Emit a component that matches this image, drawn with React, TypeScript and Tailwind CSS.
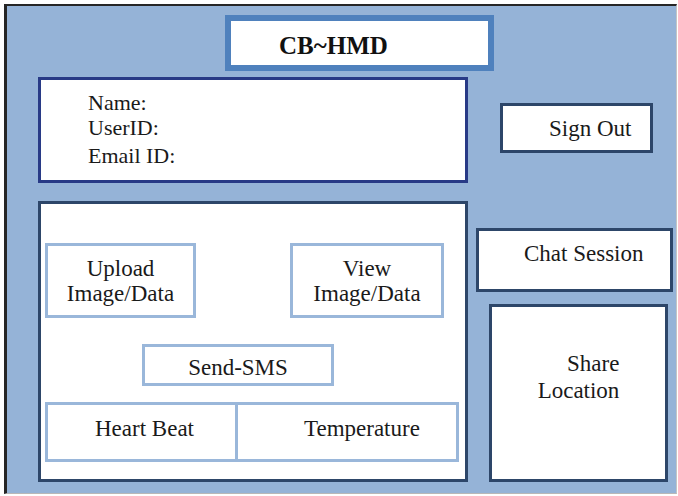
export default function App() {
  return (
    <div className="w-[678px] h-[496px] bg-white pt-[4px] pl-[4px] [font-family:'Liberation_Serif',serif] text-[#1a1a1a]">
      <div className="w-[673px] h-[490px] bg-[#95b3d7] border-l-[3px] border-t-[2px] border-l-[#262626] border-t-[#262626] border-r border-b border-r-[#c4c4c4] border-b-[#b8b8b8] flex flex-col">
        {/* title */}
        <div className="ml-[218px] mt-[9px] w-[269px] h-[56px] border-[6px] border-[#4f81bd] bg-white flex items-center pl-[48px] pt-1">
          <span className="text-[25px] leading-none font-bold text-[#111]">CB~HMD</span>
        </div>

        <div className="flex mt-[6px]">
          {/* left column */}
          <div className="ml-[31px] w-[430px] flex flex-col">
            <div className="h-[106px] border-[3px] border-[#283a86] bg-white pl-[47px] pt-[10px] text-[22px] leading-[25px]">
              <div>Name:</div>
              <div>UserID:</div>
              <div className="mt-[3px]">Email ID:</div>
            </div>

            <div className="mt-[18px] h-[281px] border-[3px] border-[#2d4669] bg-white flex flex-col text-[23px] leading-[25px]">
              <div className="flex mt-[39px] ml-[4px]">
                <div className="w-[151px] h-[75px] border-[3px] border-[#9ab7da] flex items-center justify-center text-center">
                  Upload
                  <br />
                  Image/Data
                </div>
                <div className="ml-[94px] w-[154px] h-[75px] border-[3px] border-[#9ab7da] flex items-center justify-center text-center">
                  View
                  <br />
                  Image/Data
                </div>
              </div>

              <div className="ml-[101px] mt-[26px] w-[192px] h-[42px] border-[3px] border-[#9ab7da] flex items-center justify-center pt-[4px]">
                Send-SMS
              </div>

              <div className="flex ml-[4px] mt-[16px]">
                <div className="w-[193px] h-[60px] border-[3px] border-[#9ab7da] pl-[47px] pt-[11px]">Heart Beat</div>
                <div className="w-[221px] h-[60px] border-[3px] border-l-0 border-[#9ab7da] pl-[66px] pt-[11px]">Temperature</div>
              </div>
            </div>
          </div>

          {/* right column */}
          <div className="flex flex-col text-[23px] leading-[25px]">
            <div className="ml-[32px] mt-[26px] w-[153px] h-[50px] border-[3px] border-[#2d4669] bg-white flex items-center pl-[46px]">
              Sign Out
            </div>
            <div className="ml-[8px] mt-[75px] w-[197px] h-[64px] border-[3px] border-[#2d4669] bg-white pl-[45px] pt-[10px]">
              Chat Session
            </div>
            <div className="ml-[21px] mt-[12px] w-[179px] h-[178px] border-[3px] border-[#2d4669] bg-white flex justify-center pt-[43px]">
              <div className="text-right leading-[27px]">
                Share
                <br />
                Location
              </div>
            </div>
          </div>
        </div>
      </div>
    </div>
  );
}
